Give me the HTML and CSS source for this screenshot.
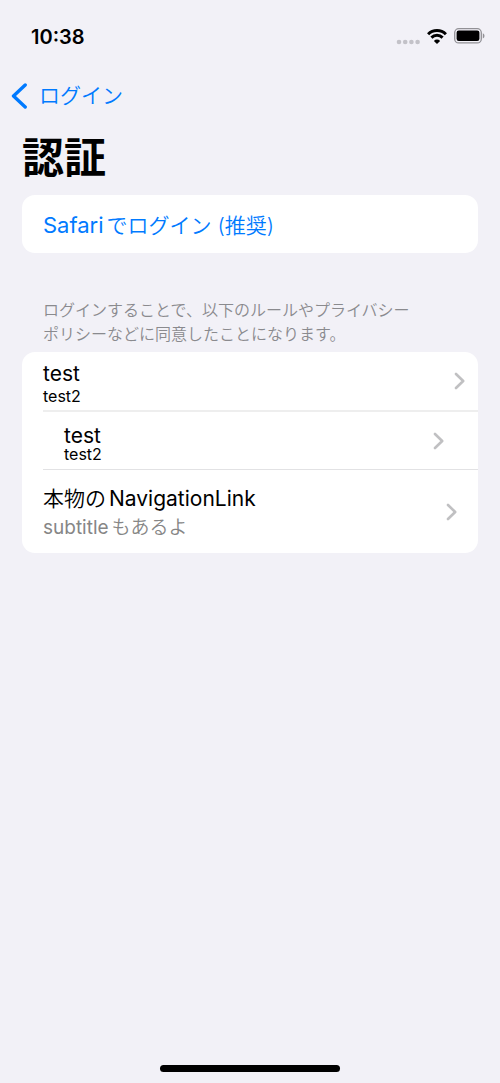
FILE: index.html
```html
<!DOCTYPE html>
<html lang="ja">
<head>
<meta charset="utf-8">
<meta name="viewport" content="width=device-width, initial-scale=1">
<title>認証</title>
<link rel="stylesheet" href="styles.css">
</head>
<body>
<div class="screen">
  <div class="status-bar">
    <time class="clock">10:38</time>
    <div class="status-icons">
      <svg class="icon-signal" width="24" height="6" viewBox="0 0 24 6" aria-hidden="true"><circle cx="3" cy="3" r="2.3"/><circle cx="9.2" cy="3" r="2.3"/><circle cx="15.4" cy="3" r="2.3"/><circle cx="21.6" cy="3" r="2.3"/></svg>
      <svg class="icon-wifi" width="20" height="15" viewBox="0 0 20 15" aria-hidden="true"><path class="arc" d="M1.1 5.2A12.6 12.6 0 0 1 18.9 5.2M4.4 8.6A7.9 7.9 0 0 1 15.6 8.6"/><path d="M10 15 6.9 11.9A4.2 4.2 0 0 1 13.1 11.9Z"/></svg>
      <svg class="icon-battery" width="31" height="16" viewBox="0 0 31 16" aria-hidden="true"><rect class="shell" x="0.7" y="0.7" width="26.6" height="14.2" rx="4"/><rect x="2.6" y="2.6" width="22.8" height="10.4" rx="2.2"/><path class="cap" d="M28.8 5.2C31 6 31 9.6 28.8 10.4Z"/></svg>
    </div>
  </div>
  <nav class="nav-bar">
    <a class="back" href="#"><svg width="17" height="26" viewBox="0 0 17 26" aria-hidden="true"><path d="M14.2 2 2.5 13 14.2 24"/></svg><span>ログイン</span></a>
  </nav>
  <main class="content">
    <h1 class="title">認証</h1>
    <section class="card">
      <button class="login" type="button"><span class="latin">Safari</span>でログイン (推奨)</button>
    </section>
    <p class="note">ログインすることで、以下のルールやプライバシーポリシーなどに同意したことになります。</p>
    <section class="card list">
      <a class="row row-edge" href="#">
        <span class="labels"><span class="name">test</span><span class="detail">test2</span></span>
        <svg class="chevron" width="11" height="18" viewBox="0 0 11 18" aria-hidden="true"><path d="M2 2 9.2 9 2 16"/></svg>
      </a>
      <a class="row row-inset" href="#">
        <span class="labels"><span class="name">test</span><span class="detail">test2</span></span>
        <svg class="chevron" width="11" height="18" viewBox="0 0 11 18" aria-hidden="true"><path d="M2 2 9.2 9 2 16"/></svg>
      </a>
      <a class="row row-link" href="#">
        <span class="labels"><span class="name"><span class="kana">本物の</span>NavigationLink</span><span class="subtitle"><span class="latin">subtitle</span>もあるよ</span></span>
        <svg class="chevron" width="11" height="18" viewBox="0 0 11 18" aria-hidden="true"><path d="M2 2 9.2 9 2 16"/></svg>
      </a>
    </section>
  </main>
  <div class="home-indicator"></div>
</div>
</body>
</html>
```
FILE: styles.css
```css
* { box-sizing: border-box; }
body {
  margin: 0;
  background: #f2f1f7;
  color: #000;
  font-family: Inter, "Noto Sans CJK JP", sans-serif;
}
a { color: inherit; text-decoration: none; }
svg { display: block; flex: none; }
.screen { min-height: 100vh; display: flex; flex-direction: column; }
.status-bar {
  display: flex;
  align-items: center;
  justify-content: space-between;
  height: 72px;
  padding: 0 15px 0 31px;
}
.clock { padding-top: 2px; font-size: 20px; font-weight: 600; line-height: 24px; }
.status-icons { display: flex; align-items: center; gap: 7px; }
.icon-signal { fill: #c3c2c8; margin-top: 11px; }
.icon-wifi .arc { fill: none; stroke: #000; stroke-width: 3; }
.icon-battery .shell { fill: none; stroke: #929196; stroke-width: 1.3; }
.icon-battery .cap { fill: #929196; }
.nav-bar { height: 48px; padding: 0 11px; display: flex; align-items: center; }
.back {
  display: flex;
  align-items: center;
  gap: 11px;
  color: #007aff;
  font-size: 21px;
  line-height: 32px;
  font-weight: 350;
}
.back path { fill: none; stroke: #007aff; stroke-width: 3.4; stroke-linecap: round; stroke-linejoin: round; }
.content { flex: 1; padding: 8px 22px 0; }
.title { margin: 0 0 7px; font-size: 42px; line-height: 60px; font-weight: 700; }
.card { background: #fff; border-radius: 13px; overflow: hidden; }
.login {
  display: block;
  width: 100%;
  height: 58px;
  padding: 0 21px 1px;
  border: 0;
  background: none;
  color: #007aff;
  font: inherit;
  font-size: 21px;
  font-weight: 350;
  text-align: left;
}
.latin { margin-right: 3px; font-weight: 400; }
.login .latin { font-size: 22px; }
.kana { margin-right: 3px; font-weight: 350; }
.note {
  margin: 45px 0 6px;
  padding: 0 56px 0 21px;
  color: #8a8a8e;
  font-size: 16px;
  line-height: 24px;
  font-weight: 350;
}
.row { display: flex; align-items: center; justify-content: space-between; margin-left: 21px; }
.labels { display: flex; flex-direction: column; }
.name { font-size: 21px; line-height: 26px; }
.detail { font-size: 16px; line-height: 18px; }
.subtitle { font-size: 19px; line-height: 26px; color: #868686; font-weight: 350; }
.chevron path { fill: none; stroke: #c0c0c2; stroke-width: 2.6; stroke-linecap: round; stroke-linejoin: round; }
.row-edge { height: 60px; padding-right: 13px; border-bottom: 2px solid #eee; }
.row-edge .labels { padding-top: 3px; }
.row-inset { height: 58px; padding: 0 34px 0 21px; border-bottom: 1px solid #e2e2e4; }
.row-inset .labels { padding-top: 8px; }
.row-inset .name { line-height: 19px; }
.row-link { height: 83px; padding-right: 21px; }
.row-link .labels { gap: 3px; padding-top: 4px; }
.home-indicator { width: 36%; height: 7px; margin: 0 auto 11px; border-radius: 4px; background: #000; }
```
